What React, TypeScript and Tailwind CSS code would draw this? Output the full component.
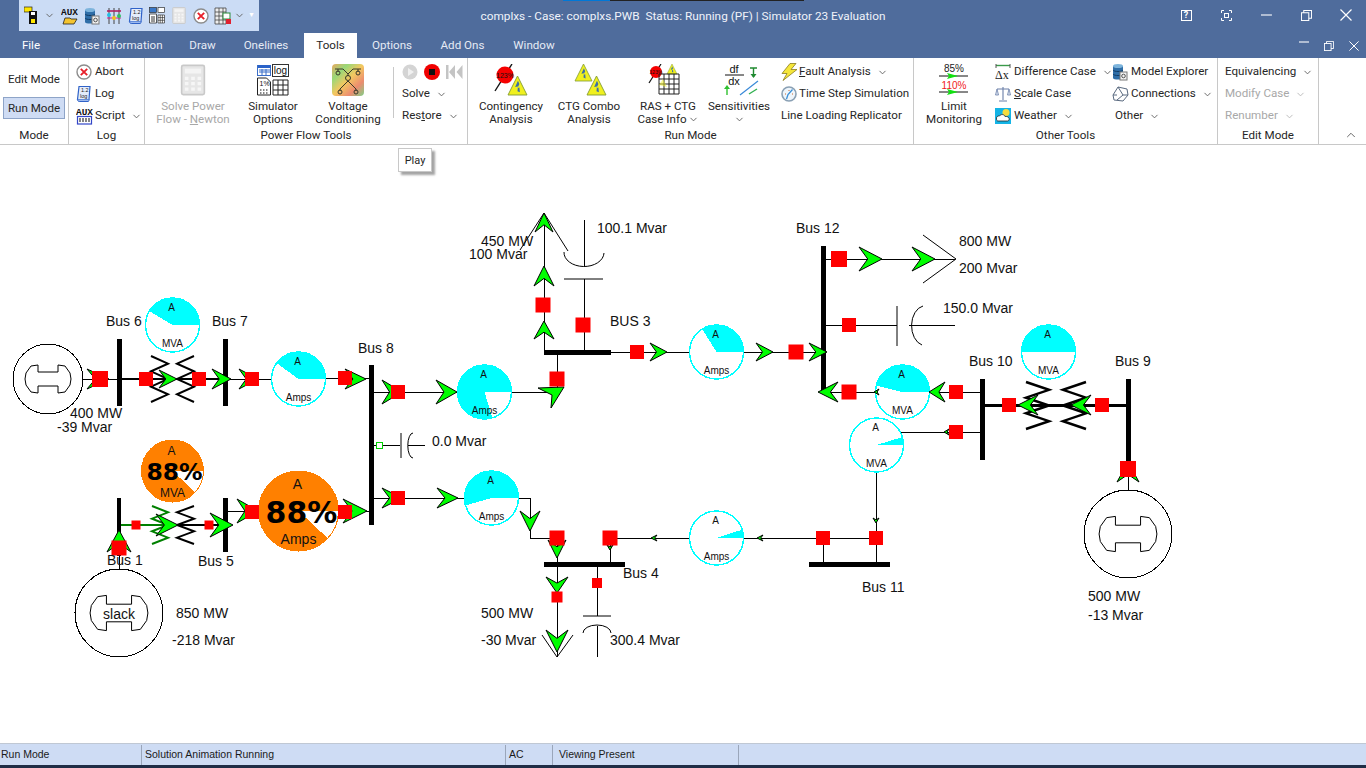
import { ChevronDown, ChevronUp } from 'lucide-react';
import type { ReactNode } from 'react';

const Caret = ({ disabled }: { disabled?: boolean }) => (
  <ChevronDown size={11} strokeWidth={2} className={disabled ? 'text-[#b8b8b8]' : 'text-[#606060]'} />
);

/* ---------- small ribbon icons ---------- */

const LogIcon = () => (
  <svg width="16" height="18" viewBox="0 0 16 18">
    <path d="M3 1.5h11l-1 13H1.5z" fill="#e4ecfb" stroke="#2f62c8" strokeWidth="1.2" />
    <path d="M1.5 14.5c0 2 1.5 2 2.5 2h8c1 0 1-1 1-2" fill="#9cb9ee" stroke="#2f62c8" />
    <text x="5" y="7" fontSize="5.5" fill="#222" fontFamily="Liberation Sans">1.2</text>
    <text x="4" y="13" fontSize="5.5" fill="#222" fontFamily="Liberation Sans">log</text>
  </svg>
);

const AbortIcon = () => (
  <svg width="16" height="16" viewBox="0 0 16 16">
    <circle cx="8" cy="8" r="7" fill="#fff" stroke="#8c8c8c" strokeWidth="1.4" />
    <path d="M4.8 4.8l6.4 6.4M11.2 4.8l-6.4 6.4" stroke="#e8202a" strokeWidth="1.9" />
  </svg>
);

const AuxIcon = ({ folder }: { folder?: boolean }) => (
  <svg width="17" height="18" viewBox="0 0 17 18">
    <text x="0" y="8" fontSize="9" fontWeight="700" fill="#111" fontFamily="Liberation Mono" textLength="17" lengthAdjust="spacingAndGlyphs">AUX</text>
    {folder ? (
      <path d="M2 17l2-6h5l1 1h6l-3 5z" fill="#f4c430" stroke="#222" strokeWidth="0.8" />
    ) : (
      <g>
        <rect x="1.5" y="9.5" width="14" height="7.5" fill="#fff" stroke="#3346c8" strokeWidth="1.2" />
        <path d="M4 11v4M7 11v4M10 11v4M13 11v4" stroke="#222" strokeWidth="1.1" />
      </g>
    )}
  </svg>
);

const DbIcon = () => (
  <svg width="16" height="18" viewBox="0 0 16 18">
    <path d="M1 3v12c0 2 10 2 10 0V3z" fill="#2f6ea8" />
    <ellipse cx="6" cy="3" rx="5" ry="2" fill="#7db4dc" />
    <path d="M1 7c1 2 9 2 10 0M1 11c1 2 9 2 10 0" stroke="#123c66" fill="none" />
    <rect x="8" y="9" width="7" height="8" fill="#f2f2f2" stroke="#777" />
    <circle cx="11.5" cy="13" r="1.8" fill="none" stroke="#555" />
  </svg>
);

const SaveIcon = () => (
  <svg width="18" height="20" viewBox="0 0 18 20">
    <rect x="0" y="1" width="8" height="5" fill="#ffe600" stroke="#222" strokeWidth="0.7" />
    <path d="M5 5h8v13H5z" fill="#111" />
    <rect x="7" y="6" width="4" height="3" fill="#fff" />
    <rect x="7" y="13" width="4" height="4" fill="#ffe600" />
  </svg>
);

const SlidersIcon = () => (
  <svg width="16" height="18" viewBox="0 0 16 18">
    <path d="M3 1v16M8 1v16M13 1v16" stroke="#444" />
    <path d="M1 4h14" stroke="#b02060" strokeWidth="1.6" />
    <path d="M1 11h14" stroke="#d02090" strokeWidth="1" />
    <circle cx="3" cy="8" r="2" fill="#22c0e8" />
    <circle cx="8" cy="11" r="2" fill="#f0c020" />
    <circle cx="13" cy="9" r="2" fill="#30c060" />
  </svg>
);

const CardsIcon = ({ gray }: { gray?: boolean }) => (
  <svg width="16" height="17" viewBox="0 0 16 17">
    <rect x="0.5" y="0.5" width="7" height="5" fill={gray ? '#ddd' : '#3a78c8'} stroke="#333" strokeWidth="0.7" />
    <rect x="9" y="0.5" width="6.5" height="5" fill="#fff" stroke="#333" strokeWidth="0.7" />
    <path d="M0.5 7h7v9h-7z" fill="#fff" stroke="#333" strokeWidth="0.8" />
    <path d="M2 10h4M2 12h4M2 14h4" stroke="#333" />
    <path d="M9 8h6.5v8H9zM9 10.6h6.5M9 13.3h6.5M11.2 8v8M13.4 8v8" fill="#fff" stroke="#333" strokeWidth="0.7" />
  </svg>
);

const CalcIcon = ({ size = 16 }: { size?: number }) => (
  <svg width={size} height={size + (size > 20 ? 6 : 1)} viewBox="0 0 16 19">
    <rect x="1" y="0.5" width="14" height="18" rx="1" fill="#e6e6e6" stroke="#c9c9c9" />
    <rect x="3" y="2.5" width="10" height="3" fill="#f4f4f4" />
    <path d="M3 7.5h2.2v2H3zM6.9 7.5h2.2v2H6.9zM10.8 7.5H13v2h-2.2zM3 10.8h2.2v2H3zM6.9 10.8h2.2v2H6.9zM10.8 10.8H13v2h-2.2zM3 14.1h2.2v2H3zM6.9 14.1h2.2v2H6.9zM10.8 14.1H13v2h-2.2z" fill="#f6f6f6" />
  </svg>
);

const GridTagIcon = () => (
  <svg width="18" height="18" viewBox="0 0 18 18">
    <path d="M1 1h11v16H1zM1 5h11M1 9h11M1 13h11M5 1v16M9 1v16" fill="#eee" stroke="#444" strokeWidth="0.8" />
    <rect x="9" y="6" width="7" height="6" fill="#fff" stroke="#2a8a3a" />
    <rect x="12" y="12" width="5" height="5" fill="#e02030" />
  </svg>
);

const BoltIcon = () => (
  <svg width="17" height="18" viewBox="0 0 17 18">
    <path d="M9 0.5L1 10.5h5L2 17.5 16 6.5h-6L15 .5z" fill="#f5e63a" stroke="#8a7a20" strokeWidth="0.8" />
  </svg>
);

const ClockIcon = () => (
  <svg width="16" height="16" viewBox="0 0 16 16">
    <circle cx="8" cy="8" r="7" fill="#eef5fb" stroke="#8aa0b4" strokeWidth="1.6" />
    <path d="M11.5 3.5L7 8.5 5.5 13" stroke="#3a90d8" strokeWidth="1.3" fill="none" />
    <path d="M8 4v1M12 8h-1M4 8h1" stroke="#d06a30" />
  </svg>
);

const DeltaIcon = () => (
  <svg width="16" height="17" viewBox="0 0 16 17">
    <path d="M1 1.5h14" stroke="#3a9a4a" strokeWidth="1.4" />
    <path d="M1 0v4M15 0v4" stroke="#555" />
    <text x="0" y="15" fontSize="12" fill="#222" fontFamily="Liberation Serif">Δx</text>
  </svg>
);

const ScaleIcon = () => (
  <svg width="16" height="16" viewBox="0 0 16 16">
    <path d="M8 1v13M4 15h8M2 3h12" stroke="#6a7fa8" strokeWidth="1.1" />
    <path d="M2 3L0.5 9h3zM14 3l-1.5 6h3z" fill="#dde4f2" stroke="#6a7fa8" strokeWidth="0.8" />
  </svg>
);

const WeatherIcon = () => (
  <svg width="16" height="16" viewBox="0 0 16 16">
    <rect width="16" height="16" fill="#14b4e6" />
    <circle cx="11" cy="4.5" r="3.5" fill="#f8dc3c" />
    <path d="M1.5 11c-.5-2.5 2-3.5 3-3 1-2 5-2 5.5.5 2-.5 5 1 4 3.5-.5 1-1.5 1-2 1H3c-1 0-1.5-1-1.5-2z" fill="#fff" stroke="#222" strokeWidth="0.8" />
  </svg>
);

const NetIcon = () => (
  <svg width="17" height="16" viewBox="0 0 17 16">
    <path d="M6 1l9 2 1 6-5 6-9-1-1-5zM6 1l5 8-6 5M11 9h5M1 9h4" fill="none" stroke="#5a6a80" strokeWidth="1" />
  </svg>
);

/* ---------- large ribbon icons ---------- */

const Warn = ({ x, y, s }: { x: number; y: number; s: number }) => (
  <g transform={`translate(${x} ${y}) scale(${s / 20})`}>
    <path d="M10 0l10 20H0z" fill="#f0f01e" stroke="#88a038" strokeWidth="1" />
    <path d="M10.5 5l-3 6.500 3-.5-.5 5 2.500 1-.5-5-2 .5 2-4z" fill="#3a6ea8" />
  </g>
);

const ContingencyIcon = () => (
  <svg width="40" height="36" viewBox="0 0 40 36">
    <path d="M21 0L4 27" stroke="#111" strokeWidth="1.4" />
    <circle cx="14" cy="11" r="8.5" fill="#f50000" />
    <text x="14" y="13.5" fontSize="7" textAnchor="middle" fill="#111" fontFamily="Liberation Sans">123%</text>
    <Warn x={17} y={12} s={19} />
  </svg>
);

const CtgComboIcon = () => (
  <svg width="40" height="36" viewBox="0 0 40 36">
    <Warn x={6} y={0} s={17} />
    <Warn x={18} y={12} s={19} />
  </svg>
);

const RasIcon = () => (
  <svg width="40" height="36" viewBox="0 0 40 36">
    <path d="M13 0L1 19" stroke="#111" strokeWidth="1.2" />
    <circle cx="8" cy="8" r="6" fill="#f50000" />
    <text x="8" y="10" fontSize="5" textAnchor="middle" fill="#111" fontFamily="Liberation Sans">123%</text>
    <Warn x={19} y={0} s={10} />
    <path d="M11 10h20v20H11zM11 15h20M11 20h20M11 25h20M16 10v20M21 10v20M26 10v20" fill="none" stroke="#222" strokeWidth="1" />
    <path d="M11 21l4-6 4 8z" fill="#f0f01e" fillOpacity="0.5" />
  </svg>
);

const SensIcon = () => (
  <svg width="40" height="36" viewBox="0 0 40 36">
    <text x="15" y="9" fontSize="11" textAnchor="middle" fill="#111" fontFamily="Liberation Sans">df</text>
    <path d="M6 11h19" stroke="#111" />
    <text x="15" y="21" fontSize="11" textAnchor="middle" fill="#111" fontFamily="Liberation Sans">dx</text>
    <path d="M31 4h7M34.5 4v9" stroke="#208a30" strokeWidth="1.4" />
    <path d="M31.5 10l3 4 3-4z" fill="#208a30" />
    <path d="M8 31v-8" stroke="#30c030" strokeWidth="1.4" />
    <path d="M5 25l3-4 3 4z" fill="#30c030" />
    <path d="M21 31l18-14" stroke="#3a8ad8" strokeWidth="1.2" />
    <path d="M30 30l8-5" stroke="#30b050" strokeWidth="1.4" />
  </svg>
);

const SimOptionsIcon = () => (
  <svg width="32" height="32" viewBox="0 0 32 32">
    <rect x="0.5" y="1.5" width="13" height="10" fill="#fff" stroke="#3a6ec8" />
    <path d="M1 1h13v3H1z" fill="#2a62c8" />
    <path d="M2 6h11M2 8h11M5 5v6M9 5v6" stroke="#3a6ec8" />
    <rect x="15.5" y="0.5" width="16" height="12" fill="#fff" stroke="#333" />
    <text x="23.5" y="9.5" fontSize="10" textAnchor="middle" fill="#111" fontFamily="Liberation Sans">log</text>
    <path d="M0.5 14h9l4 4v13H.5z" fill="#fff" stroke="#222" />
    <text x="2.5" y="22" fontSize="7" fill="#111" fontFamily="Liberation Sans">1%</text>
    <path d="M3 26h1.5M6 26h1.5M9 26h1.5M3 29h1.5M6 29h1.5M9 29h1.5" stroke="#111" />
    <path d="M16 16h15v15H16zM16 21h15M16 26h15M21 16v15M26 16v15" fill="#fff" stroke="#222" />
  </svg>
);

const VoltageIcon = () => (
  <svg width="32" height="32" viewBox="0 0 32 32">
    <defs>
      <linearGradient id="vc" x1="0" y1="0" x2="1" y2="1">
        <stop offset="0" stopColor="#e8a860" />
        <stop offset="0.25" stopColor="#98d878" />
        <stop offset="0.5" stopColor="#f4c860" />
        <stop offset="0.75" stopColor="#ec8c70" />
        <stop offset="1" stopColor="#80d088" />
      </linearGradient>
    </defs>
    <rect width="32" height="32" rx="4" fill="url(#vc)" />
    <path d="M3 5h8M21 5h8M6 5v3M26 5v3M11 5l5 5 5-5M16 10v2M16 17l-8 8M16 17l8 8M8 25v2M24 25v2" stroke="#3a3a2a" fill="none" />
    <circle cx="6" cy="9" r="2" fill="none" stroke="#3a3a2a" />
    <circle cx="26" cy="9" r="2" fill="none" stroke="#3a3a2a" />
    <circle cx="16" cy="14" r="2.5" fill="none" stroke="#3a3a2a" />
    <circle cx="8" cy="28" r="2" fill="none" stroke="#3a3a2a" />
    <circle cx="24" cy="28" r="2" fill="none" stroke="#3a3a2a" />
  </svg>
);

const LimitIcon = () => (
  <svg width="40" height="36" viewBox="0 0 40 36">
    <text x="20" y="8" fontSize="10" textAnchor="middle" fill="#222" fontFamily="Liberation Sans">85%</text>
    <path d="M5 12h29" stroke="#111" />
    <path d="M13 9l11 3-11 3 2-3z" fill="#10e010" />
    <text x="20" y="24.5" fontSize="10" textAnchor="middle" fill="#f02020" fontFamily="Liberation Sans">110%</text>
    <path d="M5 28h29" stroke="#111" />
    <path d="M13 25l11 3-11 3 2-3z" fill="#10e010" />
  </svg>
);

/* ---------- ribbon parts ---------- */

function LargeBtn({
  className,
  icon,
  children,
  disabled,
}: {
  className: string;
  icon: ReactNode;
  children: ReactNode;
  disabled?: boolean;
}) {
  return (
    <div className={`flex shrink-0 flex-col items-center ${className} ${disabled ? 'text-[#a8a8a8]' : ''}`}>
      <div className="mt-[6px] flex h-[36px] items-start">{icon}</div>
      <div className="text-center leading-[13px] whitespace-nowrap">{children}</div>
    </div>
  );
}

function SmallBtn({
  icon,
  children,
  caret,
  disabled,
  slot = 'w-[19px]',
}: {
  icon?: ReactNode;
  children: ReactNode;
  caret?: boolean;
  disabled?: boolean;
  slot?: string;
}) {
  return (
    <div className={`flex h-[22px] items-center whitespace-nowrap ${disabled ? 'text-[#a8a8a8]' : ''}`}>
      {icon && <span className={`flex shrink-0 items-center ${slot}`}>{icon}</span>}
      <span>{children}</span>
      {caret && (
        <span className="ml-[6px]">
          <Caret disabled={disabled} />
        </span>
      )}
    </div>
  );
}

function Group({ className, label, children }: { className: string; label: string; children: ReactNode }) {
  return (
    <div className={`flex h-full shrink-0 flex-col border-r border-[#c8c8c8] ${className}`}>
      <div className="flex h-[69px]">{children}</div>
      <div className="flex h-[17px] items-center justify-center leading-none">{label}</div>
    </div>
  );
}

function Tab({ className, children }: { className: string; children: ReactNode }) {
  return <div className={`flex h-full items-center justify-center ${className}`}>{children}</div>;
}

const WinRestore = ({ s = 12 }: { s?: number }) => (
  <svg width={s} height={s} viewBox="0 0 12 12" fill="none" stroke="#fff" strokeWidth="1.1">
    <rect x="0.5" y="3" width="8" height="8.5" />
    <path d="M3 3V.5h8.5V9H8.5" />
  </svg>
);
const WinMin = ({ w = 11 }: { w?: number }) => (
  <svg width={w} height="2" viewBox={`0 0 ${w} 2`}>
    <path d={`M0 1h${w}`} stroke="#fff" strokeWidth="1.1" />
  </svg>
);
const WinClose = ({ s = 12 }: { s?: number }) => (
  <svg width={s} height={s} viewBox="0 0 12 12">
    <path d="M.5.5l11 11M11.5.5l-11 11" stroke="#fff" strokeWidth="1.2" />
  </svg>
);

/* ---------- one-line diagram ---------- */

type LineDef = [number, number, number, number, number?, string?];

const lines: LineDef[] = [
  [83, 379, 119, 379],
  [122, 379, 225, 379, 2],
  [228, 379, 272, 379],
  [325, 379, 371, 378],
  [119, 569, 119, 555],
  [119, 525, 178, 525, 2, '#008000'],
  [178, 525, 225, 525, 2],
  [228, 511, 259, 511],
  [338, 511, 371, 511],
  [374, 445, 400, 445],
  [408, 445, 425, 445],
  [374, 392, 457, 392],
  [511, 392, 557, 392],
  [557, 392, 557, 352],
  [374, 498, 464, 498],
  [518, 498, 530, 498],
  [530, 498, 530, 538],
  [530, 538, 557, 538],
  [557, 538, 557, 564],
  [544, 352, 544, 213],
  [584, 352, 584, 279],
  [584, 220, 584, 266],
  [610, 352, 689, 352],
  [743, 352, 826, 352],
  [826, 259, 955, 259],
  [826, 325, 897, 325],
  [909, 325, 955, 325],
  [826, 392, 876, 392],
  [929, 392, 982, 392],
  [901, 432, 982, 432],
  [985, 405, 1128, 405, 3],
  [876, 472, 876, 564],
  [610, 538, 610, 564],
  [610, 538, 689, 538],
  [743, 538, 876, 538],
  [823, 538, 823, 564],
  [557, 567, 557, 657],
  [597, 567, 597, 616],
  [597, 626, 597, 657],
  [1128, 460, 1128, 490],
];

// [x, y, w, h]
const bars: [number, number, number, number][] = [
  [117, 339, 5, 67],
  [223, 339, 5, 67],
  [369, 365, 5, 160],
  [117, 498, 4, 58],
  [223, 498, 5, 54],
  [544, 350, 67, 5],
  [821, 246, 5, 146],
  [980, 379, 5, 81],
  [1126, 379, 5, 81],
  [1126, 460, 5, 10],
  [809, 562, 81, 5],
  [544, 562, 81, 5],
];

// [x tip, y tip, heading, length, half width]
const arrows: [number, number, number, number, number][] = [
  [109, 379, 0, 22, 10],
  [177, 379, 0, 18, 9],
  [231, 379, 0, 19, 10],
  [258, 379, 0, 19, 10],
  [366, 379, 0, 21, 10],
  [119, 530, 270, 22, 12],
  [178, 525, 0, 22, 11],
  [233, 525, 0, 23, 12],
  [258, 511, 0, 21, 12],
  [367, 511, 0, 24, 12],
  [402, 392, 0, 20, 12],
  [457, 392, 0, 21, 12],
  [544, 321, 270, 18, 10],
  [544, 266, 270, 20, 10],
  [544, 213, 270, 19, 9],
  [667, 352, 0, 17, 9],
  [773, 352, 0, 17, 9],
  [827, 352, 0, 18, 9],
  [882, 259, 0, 23, 12],
  [935, 259, 0, 23, 12],
  [818, 392, 180, 20, 10],
  [929, 392, 180, 16, 10],
  [402, 498, 0, 20, 10],
  [458, 498, 0, 21, 10],
  [530, 531, 90, 20, 10],
  [557, 558, 90, 18, 9],
  [557, 593, 90, 16, 11],
  [557, 652, 90, 22, 11],
  [1018, 405, 180, 20, 10],
  [1071, 405, 180, 20, 10],
  [1128, 462, 270, 20, 11],
  [874, 392, 180, 5, 3],
  [944, 432, 180, 5, 3],
  [876, 523, 90, 5, 3],
  [651, 538, 180, 6, 3],
  [757, 538, 180, 6, 3],
  [610, 550, 90, 5, 3],
];

// [center x, center y, size]
const squares: [number, number, number][] = [
  [100, 379, 16],
  [146, 379, 14],
  [199, 379, 14],
  [252, 379, 14],
  [345, 378, 14],
  [119, 548, 15],
  [136, 525, 9],
  [209, 525, 9],
  [252, 512, 14],
  [345, 512, 14],
  [398, 392, 14],
  [398, 498, 14],
  [557, 379, 15],
  [543, 305, 15],
  [583, 325, 15],
  [637, 352, 14],
  [796, 352, 15],
  [839, 259, 16],
  [849, 325, 14],
  [849, 392, 15],
  [956, 392, 14],
  [956, 432, 14],
  [1009, 405, 14],
  [1102, 405, 14],
  [1128, 469, 16],
  [876, 538, 14],
  [823, 538, 14],
  [557, 538, 15],
  [610, 538, 15],
  [557, 597, 11],
  [597, 583, 10],
];

// [x, baseline, text]
const labels: [number, number, string][] = [
  [106, 326, 'Bus 6'],
  [212, 326, 'Bus 7'],
  [70, 418, '400 MW'],
  [57, 432, '-39 Mvar'],
  [358, 353, 'Bus 8'],
  [432, 446, '0.0 Mvar'],
  [107, 565, 'Bus 1'],
  [198, 566, 'Bus 5'],
  [176, 618, '850 MW'],
  [172, 645, '-218 Mvar'],
  [597, 233, '100.1 Mvar'],
  [481, 246, '450 MW'],
  [469, 259, '100 Mvar'],
  [610, 326, 'BUS 3'],
  [796, 233, 'Bus 12'],
  [959, 246, '800 MW'],
  [959, 273, '200 Mvar'],
  [943, 313, '150.0 Mvar'],
  [969, 366, 'Bus 10'],
  [1115, 366, 'Bus 9'],
  [623, 578, 'Bus 4'],
  [862, 592, 'Bus 11'],
  [481, 618, '500 MW'],
  [481, 645, '-30 Mvar'],
  [610, 645, '300.4 Mvar'],
  [1088, 601, '500 MW'],
  [1088, 620, '-13 Mvar'],
];

type MeterDef = { x: number; y: number; r?: number; deg: number; unit: string; pct?: boolean };

const meters: MeterDef[] = [
  { x: 172.5, y: 325, deg: 149, unit: 'MVA' },
  { x: 298.5, y: 379, deg: 144, unit: 'Amps' },
  { x: 484.5, y: 392, deg: 287, unit: 'Amps' },
  { x: 716.5, y: 352, deg: 122, unit: 'Amps' },
  { x: 902.5, y: 392, deg: 166, unit: 'MVA' },
  { x: 876.5, y: 445, deg: 17, unit: 'MVA' },
  { x: 1048.5, y: 352, deg: 180, unit: 'MVA' },
  { x: 491.5, y: 498, deg: 196, unit: 'Amps' },
  { x: 716.5, y: 538, deg: 18, unit: 'Amps' },
  { x: 172.5, y: 471, r: 31, deg: 317, unit: 'MVA', pct: true },
  { x: 298.5, y: 511, r: 40, deg: 317, unit: 'Amps', pct: true },
];

function Meter({ x, y, r = 27, deg, unit, pct }: MeterDef) {
  const color = pct ? '#ff8000' : '#00ffff';
  const a = (deg * Math.PI) / 180;
  const ex = x + r * Math.cos(a);
  const ey = y - r * Math.sin(a);
  const big = r === 40;
  return (
    <g>
      <circle cx={x} cy={y} r={r} fill="#fff" stroke={color} strokeWidth={pct ? 1 : 1.5} shapeRendering="crispEdges" />
      <path
        d={`M${x} ${y}L${x + r} ${y}A${r} ${r} 0 ${deg > 180 ? 1 : 0} 0 ${ex} ${ey}Z`}
        fill={color}
        shapeRendering="crispEdges"
      />
      <text x={x - 1} y={y + (big ? -22 : pct ? -16 : -14)} textAnchor="middle" fontSize={big ? 14 : pct ? 12 : 10}>
        A
      </text>
      {pct && (
        <text
          x={x + (big ? 3 : 2)}
          y={y + (big ? 12 : 9)}
          textAnchor="middle"
          fontSize={big ? 30 : 23.5}
          fontWeight="700"
          fill="#000"
          fontFamily="DejaVu Sans"
        >
          88%
        </text>
      )}
      <text x={x} y={y + (big ? 33 : pct ? 26 : 22)} textAnchor="middle" fontSize={big ? 14 : pct ? 12 : 10}>
        {unit}
      </text>
    </g>
  );
}

function Generator({ x, y, r, slack }: { x: number; y: number; r: number; slack?: boolean }) {
  const k = r / 35;
  return (
    <g>
      <circle cx={x} cy={y} r={r} fill="#fff" stroke="#000" shapeRendering="crispEdges" />
      <path
        transform={`translate(${x} ${y}) scale(${k})`}
        d="M-10-7H10V-14L17-13 22-6 23 0 22 6 17 13 10 14V7H-10V14L-17 13-22 6-23 0-22-6-17-13-10-14Z"
        fill="none"
        stroke="#000"
        vectorEffect="non-scaling-stroke"
      />
      {slack && (
        <text x={x} y={y + 6} textAnchor="middle" fontSize="14">
          slack
        </text>
      )}
    </g>
  );
}

const Coil = ({ x, y, w, h, sw = 2, color = '#000' }: { x: number; y: number; w: number; h: number; sw?: number; color?: string }) => {
  const pts = [0, 1, 2, 3, 4, 5, 6]
    .map(i => `${x + (i % 2 ? w : 0)},${y + (h * i) / 6}`)
    .join(' ');
  return <polyline points={pts} fill="none" stroke={color} strokeWidth={sw} />;
};

function Diagram() {
  return (
    <svg
      viewBox="0 145 1366 598"
      className="h-full w-full font-['Liberation_Sans',sans-serif]"
      fontSize="14"
      fill="#111"
    >
      {lines.map(([x1, y1, x2, y2, w = 1, c = '#000'], i) => (
        <line key={i} x1={x1} y1={y1} x2={x2} y2={y2} stroke={c} strokeWidth={w} shapeRendering="crispEdges" />
      ))}

      {/* shunts and loads */}
      <g fill="none" stroke="#000">
        <path d="M401 433v25M413 433A5 12 0 0 0 413 458" />
        <path d="M564 279h39M564 252A20 14 0 0 0 604 253" />
        <path d="M897 306v40M923 306A14 20 0 0 0 922 345" />
        <path d="M583 616h28M583 633A14 8 0 0 1 611 633" />
        <path d="M520 250l24-37 24 38" />
        <path d="M923 235l33 24-33 24" />
        <path d="M542 635l15 22 16-22" />
      </g>
      <rect x="376.5" y="442.5" width="6" height="6" fill="#fff" stroke="#00d000" shapeRendering="crispEdges" />

      {/* transformers */}
      <Coil x={151} y={356} w={17} h={46} />
      <Coil x={194} y={356} w={-17} h={46} />
      <Coil x={152} y={506} w={16} h={38} color="#008000" />
      <Coil x={194} y={506} w={-17} h={38} />
      <Coil x={1026} y={382} w={23} h={47} sw={2.5} />
      <Coil x={1086} y={382} w={-23} h={47} sw={2.5} />

      {bars.map(([x, y, w, h], i) => (
        <rect key={i} x={x} y={y} width={w} height={h} fill="#000" />
      ))}

      <Generator x={48} y={379} r={35} />
      <Generator x={119} y={613} r={44} slack />
      <Generator x={1128} y={534} r={44} />

      {meters.map((m, i) => (
        <Meter key={i} {...m} />
      ))}

      {arrows.map(([x, y, deg, l, w], i) => (
        <polygon
          key={i}
          transform={`translate(${x} ${y}) rotate(${deg})`}
          points={`0,0 ${-l},${-w} ${-l * 0.62},0 ${-l},${w}`}
          fill="#00ff00"
          stroke="#000"
        />
      ))}
      <polygon points="564,387 538,388 552,395 551,408" fill="#00ff00" stroke="#000" />

      {squares.map(([x, y, s], i) => (
        <rect key={i} x={x - s / 2} y={y - s / 2} width={s} height={s} fill="#ff0000" />
      ))}

      {labels.map(([x, y, t], i) => (
        <text key={i} x={x} y={y}>
          {t}
        </text>
      ))}
    </svg>
  );
}

export default function App() {
  return (
    <div className="relative flex h-[768px] w-[1366px] flex-col overflow-hidden bg-white font-['Roboto',sans-serif] text-[11.6px] text-[#262626]">
      {/* taskbar sliver over the top edge */}
      <div className="absolute top-0 left-[563px] h-px w-[47px] bg-[#0078d7]" />
      <div className="absolute top-0 left-[610px] h-px w-[194px] bg-[#222]" />

      {/* title bar */}
      <div className="grid h-[33px] shrink-0 grid-cols-[1fr_auto_1fr] bg-[#4f6c9c] text-white">
        <div>
          <div className="ml-[19px] flex h-[31px] w-[240px] items-center bg-[#cbdcf5] pl-[5px]">
            <SaveIcon />
            <span className="ml-[2px] w-[14px]"><Caret /></span>
            <span className="ml-[3px] w-[23px]"><AuxIcon folder /></span>
            <span className="w-[22px]"><DbIcon /></span>
            <span className="w-[22px]"><SlidersIcon /></span>
            <span className="w-[21px]"><LogIcon /></span>
            <span className="w-[22px]"><CardsIcon /></span>
            <span className="w-[22px]"><CalcIcon /></span>
            <span className="w-[21px]"><AbortIcon /></span>
            <span className="w-[20px]"><GridTagIcon /></span>
            <span className="w-[13px]"><Caret /></span>
            <span className="ml-[1px] text-[7px] leading-none text-white">▼</span>
          </div>
        </div>
        <div className="flex items-center text-[11.8px] whitespace-pre text-[#f0f3fa]">
          complxs - Case: complxs.PWB  Status: Running (PF) | Simulator 23 Evaluation
        </div>
        <div className="flex items-start justify-end">
          <div className="flex h-[30px] w-[40px] items-center justify-center">
            <span className="flex h-[11px] w-[11px] items-center justify-center border border-white text-[9px] leading-none font-bold">?</span>
          </div>
          <div className="flex h-[30px] w-[40px] items-center justify-center">
            <svg width="11" height="11" viewBox="0 0 11 11" fill="none" stroke="#fff">
              <path d="M.5 3V.5H3M8 .5h2.5V3M10.5 8v2.5H8M3 10.5H.5V8" />
              <rect x="3.5" y="3.5" width="4" height="4" />
            </svg>
          </div>
          <div className="flex h-[30px] w-[40px] items-center justify-center"><WinMin /></div>
          <div className="flex h-[30px] w-[40px] items-center justify-center"><WinRestore s={11} /></div>
          <div className="flex h-[30px] w-[40px] items-center justify-center"><WinClose /></div>
        </div>
      </div>

      {/* tabs */}
      <div className="flex h-[25px] shrink-0 items-center bg-[#4f6c9c] text-[#e6ebf5]">
        <Tab className="w-[62px] text-white">File</Tab>
        <Tab className="w-[112px]">Case Information</Tab>
        <Tab className="w-[57px]">Draw</Tab>
        <Tab className="w-[70px]">Onelines</Tab>
        <Tab className="ml-[3px] w-[53px] bg-white text-[#262626]">Tools</Tab>
        <Tab className="w-[70px]">Options</Tab>
        <Tab className="w-[71px]">Add Ons</Tab>
        <Tab className="w-[72px]">Window</Tab>
        <div className="ml-auto flex">
          <div className="flex w-[25px] justify-center"><WinMin w={10} /></div>
          <div className="flex w-[25px] justify-center"><WinRestore s={10} /></div>
          <div className="flex w-[25px] justify-center"><WinClose s={10} /></div>
        </div>
      </div>

      {/* ribbon */}
      <div className="flex h-[87px] shrink-0 border-b border-[#c8c8c8] bg-white">
        <Group className="w-[69px]" label="Mode">
          <div className="flex w-full flex-col items-center pt-[11px]">
            <div className="flex h-[22px] items-center">Edit Mode</div>
            <div className="mt-[6px] flex h-[22px] w-[62px] items-center justify-center border border-[#8ea4c8] bg-[#cfdcf4] pt-px">
              Run Mode
            </div>
          </div>
        </Group>

        <Group className="w-[76px]" label="Log">
          <div className="pt-[3px] pl-[7px]">
            <SmallBtn icon={<AbortIcon />}>Abort</SmallBtn>
            <SmallBtn icon={<LogIcon />}>Log</SmallBtn>
            <SmallBtn icon={<AuxIcon />} caret>Script</SmallBtn>
          </div>
        </Group>

        <Group className="w-[323px]" label="Power Flow Tools">
          <LargeBtn className="w-[96px]" icon={<CalcIcon size={26} />} disabled>
            Solve Power
            <br />
            Flow - <u>N</u>ewton
          </LargeBtn>
          <LargeBtn className="w-[64px]" icon={<SimOptionsIcon />}>
            Simulator
            <br />
            Options
          </LargeBtn>
          <LargeBtn className="w-[86px]" icon={<VoltageIcon />}>
            Voltage
            <br />
            Conditioning
          </LargeBtn>
          <div className="mt-[9px] ml-[2px] h-[51px] w-px shrink-0 bg-[#c8c8c8]" />
          <div className="ml-[8px] shrink-0 pt-[3px]">
            <div className="flex h-[22px] items-center gap-[6px]">
              <svg width="16" height="16" viewBox="0 0 16 16">
                <circle cx="8" cy="8" r="7.5" fill="#d4d4d4" />
                <path d="M6 4l6 4-6 4z" fill="#f0f0f0" />
              </svg>
              <svg width="16" height="16" viewBox="0 0 16 16">
                <circle cx="8" cy="8" r="8" fill="#f00000" />
                <rect x="5" y="5" width="6" height="6" fill="#111" />
              </svg>
              <svg width="17" height="14" viewBox="0 0 17 14">
                <path d="M0 0h2.5v14H0zM9 0v14L3 7zM16.5 0v14l-6-7z" fill="#c4c4c4" />
              </svg>
            </div>
            <SmallBtn caret>Solve</SmallBtn>
            <SmallBtn caret>Res<u>t</u>ore</SmallBtn>
          </div>
        </Group>

        <Group className="w-[446px]" label="Run Mode">
          <LargeBtn className="w-[86px]" icon={<ContingencyIcon />}>
            Contin<u>g</u>ency
            <br />
            Analysis
          </LargeBtn>
          <LargeBtn className="w-[70px]" icon={<CtgComboIcon />}>
            CTG Combo
            <br />
            Analysis
          </LargeBtn>
          <LargeBtn className="w-[88px]" icon={<RasIcon />}>
            RAS + CTG
            <br />
            <span className="inline-flex items-center gap-[1px]">Case Info <Caret /></span>
          </LargeBtn>
          <LargeBtn className="w-[54px]" icon={<SensIcon />}>
            Sensitivities
            <span className="flex h-[13px] items-center justify-center"><Caret /></span>
          </LargeBtn>
          <div className="ml-[15px] shrink-0 pt-[3px]">
            <SmallBtn icon={<BoltIcon />} caret slot="w-[18px]"><u>F</u>ault Analysis</SmallBtn>
            <SmallBtn icon={<ClockIcon />} slot="w-[18px]">Time Step Simulation</SmallBtn>
            <SmallBtn>Line Loading Replicator</SmallBtn>
          </div>
        </Group>

        <Group className="w-[304px]" label="Other Tools">
          <LargeBtn className="w-[80px]" icon={<LimitIcon />}>
            Limit
            <br />
            Monitoring
          </LargeBtn>
          <div className="w-[118px] shrink-0 pt-[3px] pl-px">
            <SmallBtn icon={<DeltaIcon />} caret><span>Difference Case</span></SmallBtn>
            <SmallBtn icon={<ScaleIcon />}><u>S</u>cale Case</SmallBtn>
            <SmallBtn icon={<WeatherIcon />} caret>Weather</SmallBtn>
          </div>
          <div className="shrink-0 pt-[3px]">
            <SmallBtn icon={<DbIcon />}>Model Explorer</SmallBtn>
            <SmallBtn icon={<NetIcon />} caret>Connections</SmallBtn>
            <div className="pl-[3px]">
              <SmallBtn caret>Other</SmallBtn>
            </div>
          </div>
        </Group>

        <Group className="w-[101px]" label="Edit Mode">
          <div className="pt-[3px] pl-[7px]">
            <SmallBtn caret>Equivalencing</SmallBtn>
            <SmallBtn caret disabled>Modify Case</SmallBtn>
            <SmallBtn caret disabled>Renumber</SmallBtn>
          </div>
        </Group>

        <div className="flex flex-1 items-end justify-end pr-[8px] pb-[2px]">
          <ChevronUp size={14} strokeWidth={1.5} className="text-[#555]" />
        </div>
      </div>

      {/* oneline canvas */}
      <div className="relative min-h-0 flex-1">
        <Diagram />
        <div className="absolute top-[3px] left-[398px] flex h-[24px] w-[34px] items-center justify-center border border-[#c8c8c8] bg-white pt-[2px] text-[11px] shadow-[3px_3px_2px_rgba(90,90,90,0.55)]">
          Play
        </div>
      </div>

      {/* status bar */}
      <div className="flex h-[22px] shrink-0 items-center border-t border-[#c0c8d4] bg-[#cedcf4] pt-px font-['Liberation_Sans',sans-serif] text-[10.5px] text-[#1a1a1a]">
        <div className="flex h-full w-[142px] items-center border-r border-[#9aa6ba] pl-px">Run Mode</div>
        <div className="flex h-full w-[364px] items-center border-r border-[#9aa6ba] pl-[3px]">Solution Animation Running</div>
        <div className="flex h-full w-[47px] items-center border-r border-[#9aa6ba] pl-[3px]">AC</div>
        <div className="flex h-full w-[186px] items-center border-r border-[#9aa6ba] pl-[6px]">Viewing Present</div>
      </div>
      <div className="h-[3px] shrink-0 bg-[#1f2d46]" />
    </div>
  );
}
